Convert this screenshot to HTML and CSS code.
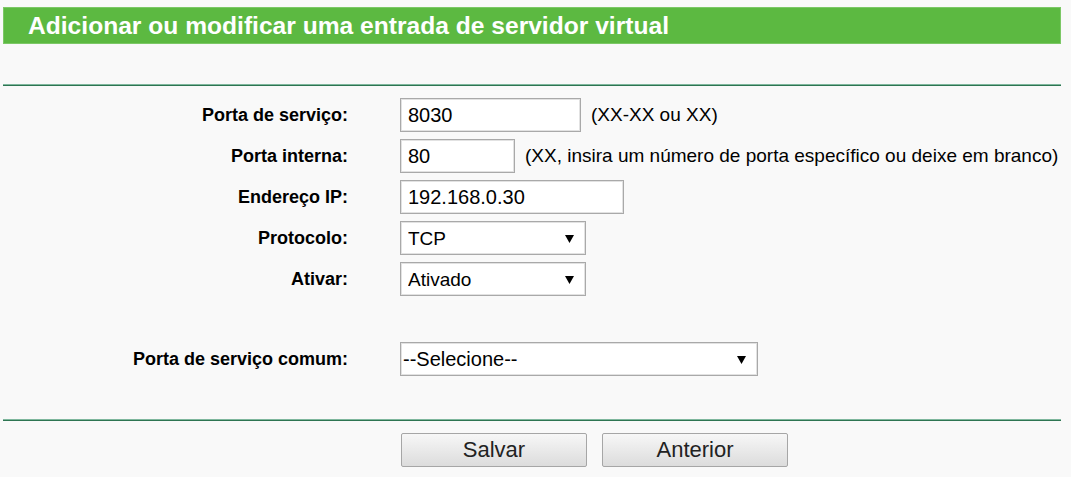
FILE: index.html
```html
<!DOCTYPE html>
<html lang="pt">
<head>
<meta charset="utf-8">
<title>Servidor virtual</title>
<link rel="stylesheet" href="styles.css">
</head>
<body>
<div class="page">
  <div class="title-bar">Adicionar ou modificar uma entrada de servidor virtual</div>
  <div class="rule rule-top"></div>
  <form class="form">
    <div class="row">
      <label class="label">Porta de serviço:</label>
      <div class="field">
        <input class="input w-180" type="text" value="8030">
        <span class="hint">(XX-XX ou XX)</span>
      </div>
    </div>
    <div class="row">
      <label class="label">Porta interna:</label>
      <div class="field">
        <input class="input w-114" type="text" value="80">
        <span class="hint">(XX, insira um número de porta específico ou deixe em branco)</span>
      </div>
    </div>
    <div class="row">
      <label class="label">Endereço IP:</label>
      <div class="field">
        <input class="input w-224" type="text" value="192.168.0.30">
      </div>
    </div>
    <div class="row">
      <label class="label">Protocolo:</label>
      <div class="field">
        <select class="select w-186"><option>TCP</option></select>
      </div>
    </div>
    <div class="row">
      <label class="label">Ativar:</label>
      <div class="field">
        <select class="select w-186"><option>Ativado</option></select>
      </div>
    </div>
    <div class="row row-common">
      <label class="label">Porta de serviço comum:</label>
      <div class="field">
        <select class="select select-wide w-358"><option>--Selecione--</option></select>
      </div>
    </div>
  </form>
  <div class="rule rule-bottom"></div>
  <div class="buttons">
    <button class="btn" type="button">Salvar</button>
    <button class="btn" type="button">Anterior</button>
  </div>
</div>
</body>
</html>
```
FILE: styles.css
```css
html, body {
  margin: 0;
  padding: 0;
  background: #f9f9f9;
}
body {
  font-family: "Liberation Sans", Arial, sans-serif;
  color: #000;
}
.page {
  width: 1058px;
  margin-left: 3px;
  padding-top: 7px;
}
.title-bar {
  height: 37px;
  box-sizing: border-box;
  background: #5cb941;
  border: 1px solid #7cc866;
  color: #fff;
  font-size: 24.6px;
  font-weight: bold;
  line-height: 35px;
  padding-left: 24px;
  white-space: nowrap;
}
.rule {
  height: 0;
  border-top: 1px solid #7fb79d;
  border-bottom: 1px solid #2e7552;
}
.rule-top {
  margin-top: 40px;
}
.form {
  margin: 0;
  padding-top: 12px;
}
.row {
  display: grid;
  grid-template-columns: 345px auto;
  column-gap: 52px;
  align-items: center;
  height: 34px;
  margin-bottom: 7px;
}
.row-common {
  margin-top: 46px;
  margin-bottom: 0;
}
.label {
  text-align: right;
  font-weight: bold;
  font-size: 18px;
  white-space: nowrap;
}
.field {
  display: flex;
  align-items: center;
  gap: 10px;
}
.input, .select {
  box-sizing: border-box;
  height: 34px;
  border: 1px solid #a9a9a9;
  box-shadow: inset 0 0 0 1px #e2e2e2;
  background-color: #fff;
  font-family: "Liberation Sans", Arial, sans-serif;
  font-size: 19px;
  color: #000;
  padding: 0 7px;
  margin: 0;
  border-radius: 0;
  outline: none;
}
.input {
  font-size: 20px;
}
.select {
  appearance: none;
  -webkit-appearance: none;
  background-image: url("data:image/svg+xml,%3Csvg xmlns='http://www.w3.org/2000/svg' width='9' height='9' viewBox='0 0 9 9'%3E%3Cpath d='M0 1h9L4.5 9z' fill='%23000'/%3E%3C/svg%3E");
  background-repeat: no-repeat;
  background-position: right 11px center;
  padding-right: 26px;
}
.select-wide {
  font-size: 20px;
  padding-left: 2px;
}
.w-180 { width: 181px; }
.w-114 { width: 115px; }
.w-224 { width: 224px; }
.w-186 { width: 186px; }
.w-358 { width: 358px; }
.hint {
  font-size: 19px;
  white-space: nowrap;
}
.rule-bottom {
  margin-top: 43px;
}
.buttons {
  display: flex;
  gap: 15px;
  padding-left: 398px;
  padding-top: 12px;
}
.btn {
  width: 186px;
  height: 34px;
  border: 1px solid #a6a6a6;
  border-radius: 2px;
  background: linear-gradient(#f7f7f7, #dcdcdc);
  font-family: "Liberation Sans", Arial, sans-serif;
  font-size: 22px;
  color: #222;
  padding: 0;
}
```
